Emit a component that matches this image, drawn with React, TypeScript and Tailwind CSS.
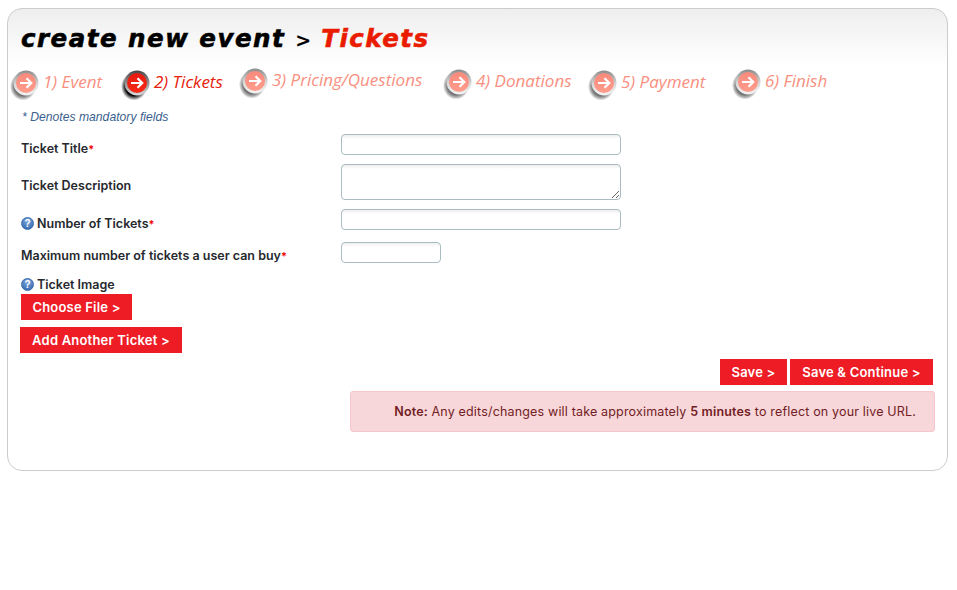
import { FC, ReactNode } from "react";

const StepIcon: FC<{ active?: boolean }> = ({ active }) => (
  <svg width="30" height="32" viewBox="0 0 30 32" className="shrink-0">
    <defs>
      <radialGradient id={active ? "shadowA" : "shadowB"} cx="50%" cy="50%" r="50%">
        <stop offset="65%" stopColor={active ? "#000" : "#333"} stopOpacity={active ? 1 : 0.7} />
        <stop offset="100%" stopColor="#000" stopOpacity="0" />
      </radialGradient>
      <linearGradient id={active ? "ringA" : "ringB"} x1="0" y1="0" x2="0" y2="1">
        <stop offset="0%" stopColor={active ? "#444" : "#8a8a8a"} />
        <stop offset="55%" stopColor={active ? "#999" : "#d8d8d8"} />
        <stop offset="100%" stopColor={active ? "#ddd" : "#f4f4f4"} />
      </linearGradient>
      <linearGradient id={active ? "fillA" : "fillB"} x1="0" y1="0" x2="0" y2="1">
        <stop offset="0%" stopColor={active ? "#e81a10" : "#f98a7c"} />
        <stop offset="100%" stopColor={active ? "#f52a18" : "#ff9c8c"} />
      </linearGradient>
    </defs>
    <ellipse cx="13" cy="17.5" rx="13" ry="14" fill={`url(#${active ? "shadowA" : "shadowB"})`} />
    <circle cx="16" cy="14" r="12.5" fill={`url(#${active ? "ringA" : "ringB"})`} />
    <circle cx="16" cy="14" r="10" fill={`url(#${active ? "fillA" : "fillB"})`} />
    <path
      d="M10 14h11M16.5 9.2l4.8 4.8-4.8 4.8"
      fill="none"
      stroke="#fff"
      strokeWidth="2.2"
    />
  </svg>
);

const HelpIcon: FC = () => (
  <span className="w-[13px] h-[13px] mb-[2px] rounded-full bg-[radial-gradient(circle_at_50%_25%,#7ba6dc,#2f62a8)] border border-[#3a6cb0] text-white text-[10px] leading-[11px] font-bold text-center shrink-0 font-['Liberation_Sans',sans-serif]">
    ?
  </span>
);

const RedButton: FC<{ className?: string; children: ReactNode }> = ({
  className,
  children,
}) => (
  <button
    type="button"
    className={`h-[26px] pt-[2px] bg-[#ee1c25] text-white text-[13px] font-semibold font-['Inter',sans-serif] tracking-[0.2px] ${className ?? ""}`}
  >
    {children}
  </button>
);

const Req: FC = () => <span className="text-[#e00] text-[11px]">*</span>;

const steps = [
  { label: "1) Event", width: "w-[111px]", top: "mt-[0px]", color: "text-[#f98f80]" },
  { label: "2) Tickets", width: "w-[118px]", top: "mt-[0px]", color: "text-[#e6200c]", active: true },
  { label: "3) Pricing/Questions", width: "w-[204px]", top: "mt-[-2px]", color: "text-[#f98f80]" },
  { label: "4) Donations", width: "w-[145px]", top: "mt-[-1px]", color: "text-[#f98f80]" },
  { label: "5) Payment", width: "w-[144px]", top: "mt-[0px]", color: "text-[#f98f80]" },
  { label: "6) Finish", width: "w-[100px]", top: "mt-[-1px]", color: "text-[#f98f80]" },
];

const inputClass =
  "block rounded-[4px] border border-[#a9bcc2] bg-[linear-gradient(#eeeeee,#ffffff_4px)]";

export default function App() {
  return (
    <div className="w-[957px] h-[590px] bg-white pt-2 pl-[7px] overflow-hidden">
      <div className="w-[941px] h-[463px] rounded-[15px] border border-[#cccccc] bg-[linear-gradient(#efeeef,#ffffff_56px)] px-[13px] relative">
        <h1 className="h-[60px] pt-[15px] text-[24.5px] leading-[30px] font-bold italic font-['DejaVu_Sans',sans-serif] text-black tracking-[1.5px] [-webkit-text-stroke:0.6px] whitespace-nowrap">
          create new event{" "}
          <span className="text-[19px] font-bold not-italic tracking-normal [-webkit-text-stroke:0px]">&gt;</span>{" "}
          <span className="text-[#ea1c00]">Tickets</span>
        </h1>

        <div className="flex ml-[-11px]">
          {steps.map((s) => (
            <div key={s.label} className={`flex items-start shrink-0 ${s.width} ${s.top}`}>
              <StepIcon active={s.active} />
              <span
                className={`ml-[3px] mt-[1px] text-[17px] leading-[24px] italic whitespace-nowrap font-['Open_Sans',sans-serif] ${s.color}`}
              >
                {s.label}
              </span>
            </div>
          ))}
        </div>

        <p className="mt-[9px] text-[12.2px] leading-[14px] italic text-[#3b5f8f] font-['Liberation_Sans',sans-serif]">
          <span className="ml-[1px]">* Denotes mandatory fields</span>
        </p>

        <div className="mt-[10px] font-['Inter',sans-serif] text-[12.5px] font-semibold text-[#26292e]">
          <div className="flex items-center h-[21px]">
            <label className="w-[320px] pt-[9px]">
              Ticket Title<Req />
            </label>
            <input className={`${inputClass} h-[21px] w-[280px]`} />
          </div>
          <div className="flex items-center h-[36px] mt-[9px]">
            <label className="w-[320px] pt-[8px]">Ticket Description</label>
            <textarea className={`${inputClass} h-[36px] w-[280px]`} />
          </div>
          <div className="flex items-center h-[21px] mt-[9px]">
            <label className="w-[320px] flex items-center gap-[3px] pt-[9px]">
              <HelpIcon />
              <span>
                Number of Tickets<Req />
              </span>
            </label>
            <input className={`${inputClass} h-[21px] w-[280px]`} />
          </div>
          <div className="flex items-center h-[21px] mt-[12px]">
            <label className="w-[320px] whitespace-nowrap pt-[8px]">
              Maximum number of tickets a user can buy<Req />
            </label>
            <input className={`${inputClass} h-[21px] w-[100px]`} />
          </div>
          <div className="flex items-center gap-[3px] h-[16px] mt-[13px] pt-[2px]">
            <HelpIcon />
            <span>Ticket Image</span>
          </div>
        </div>

        <RedButton className="w-[111px] mt-[2px] block">Choose File &gt;</RedButton>
        <RedButton className="w-[162px] mt-[7px] ml-[-1px] block">
          Add Another Ticket &gt;
        </RedButton>

        <div className="flex justify-end gap-[3px] mt-[6px] mr-[1px]">
          <RedButton className="w-[67px]">Save &gt;</RedButton>
          <RedButton className="w-[143px]">Save &amp; Continue &gt;</RedButton>
        </div>

        <div className="mt-[6px] ml-[329px] mr-[-1px] h-[41px] rounded-[3px] border border-[#f5c6cb] bg-[#f8d7da] text-[#721c24] text-[12.5px] tracking-[0.17px] leading-[39px] text-right pr-[18px] whitespace-nowrap font-['Inter',sans-serif]">
          <b className="font-semibold">Note:</b> Any edits/changes will take approximately{" "}
          <b className="font-semibold">5 minutes</b> to reflect on your live URL.
        </div>
      </div>
    </div>
  );
}
